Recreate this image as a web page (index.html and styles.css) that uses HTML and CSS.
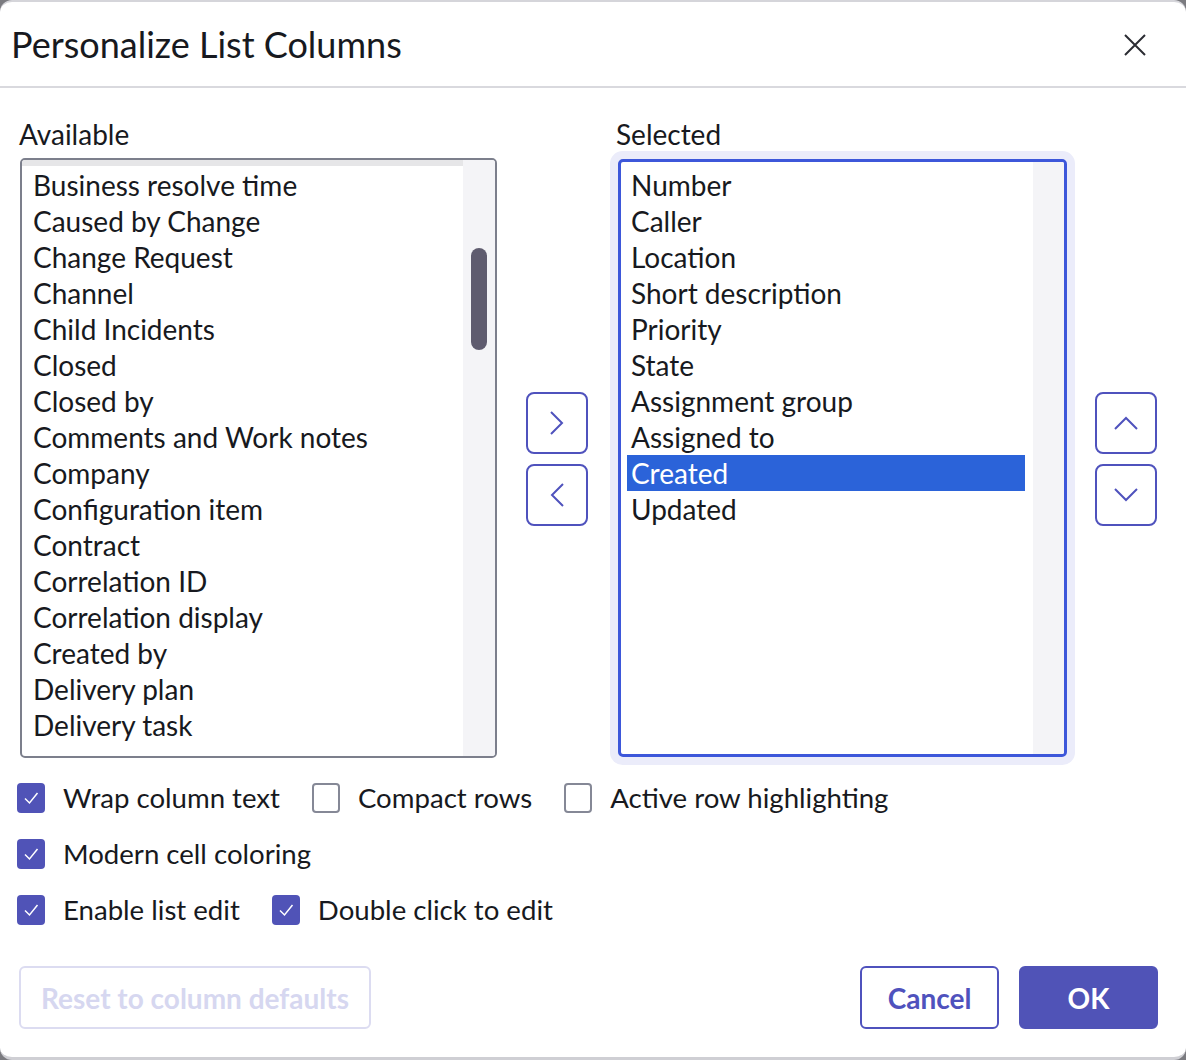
FILE: index.html
```html
<!DOCTYPE html>
<html lang="en">
<head>
<meta charset="utf-8">
<title>Personalize List Columns</title>
<link rel="stylesheet" href="styles.css">
</head>
<body>
<div class="dialog">
  <header class="dlg-head">
    <h1 class="dlg-title">Personalize List Columns</h1>
    <button class="close" aria-label="Close">
      <svg width="22" height="22" viewBox="0 0 22 22"><path d="M1 1 L21 21 M21 1 L1 21" stroke="#2b2c33" stroke-width="2" fill="none"/></svg>
    </button>
  </header>

  <main class="dlg-body">
    <div class="picker">
      <div class="label">Available</div>
      <div></div>
      <div class="label label-sel">Selected</div>
      <div></div>

      <div class="listbox avail">
        <div class="items">
          <div class="peek"></div>
          <div class="opt">Business resolve time</div>
          <div class="opt">Caused by Change</div>
          <div class="opt">Change Request</div>
          <div class="opt">Channel</div>
          <div class="opt">Child Incidents</div>
          <div class="opt">Closed</div>
          <div class="opt">Closed by</div>
          <div class="opt">Comments and Work notes</div>
          <div class="opt">Company</div>
          <div class="opt">Configuration item</div>
          <div class="opt">Contract</div>
          <div class="opt">Correlation ID</div>
          <div class="opt">Correlation display</div>
          <div class="opt">Created by</div>
          <div class="opt">Delivery plan</div>
          <div class="opt">Delivery task</div>
        </div>
        <div class="track"><div class="thumb"></div></div>
      </div>

      <div class="movers">
        <button class="icon-btn" aria-label="Add">
          <svg width="24" height="28" viewBox="0 0 24 28"><polyline points="6,3 17,14 6,25" fill="none" stroke="#4f52bd" stroke-width="2"/></svg>
        </button>
        <button class="icon-btn" aria-label="Remove">
          <svg width="24" height="28" viewBox="0 0 24 28"><polyline points="18,3 7,14 18,25" fill="none" stroke="#4f52bd" stroke-width="2"/></svg>
        </button>
      </div>

      <div class="listbox sel">
        <div class="items">
          <div class="opt">Number</div>
          <div class="opt">Caller</div>
          <div class="opt">Location</div>
          <div class="opt">Short description</div>
          <div class="opt">Priority</div>
          <div class="opt">State</div>
          <div class="opt">Assignment group</div>
          <div class="opt">Assigned to</div>
          <div class="opt is-selected">Created</div>
          <div class="opt">Updated</div>
        </div>
        <div class="track"></div>
      </div>

      <div class="movers">
        <button class="icon-btn" aria-label="Move up">
          <svg width="28" height="24" viewBox="0 0 28 24"><polyline points="3,18 14,7 25,18" fill="none" stroke="#4f52bd" stroke-width="2"/></svg>
        </button>
        <button class="icon-btn" aria-label="Move down">
          <svg width="28" height="24" viewBox="0 0 28 24"><polyline points="3,6 14,17 25,6" fill="none" stroke="#4f52bd" stroke-width="2"/></svg>
        </button>
      </div>
    </div>

    <div class="options">
      <div class="opt-row">
        <label class="check"><span class="box on"><svg width="28" height="30" viewBox="0 0 28 30"><polyline points="8,15.5 12.5,20 20.5,10" fill="none" stroke="#fff" stroke-width="1.5"/></svg></span>Wrap column text</label>
        <label class="check"><span class="box"></span>Compact rows</label>
        <label class="check"><span class="box"></span>Active row highlighting</label>
      </div>
      <div class="opt-row">
        <label class="check"><span class="box on"><svg width="28" height="30" viewBox="0 0 28 30"><polyline points="8,15.5 12.5,20 20.5,10" fill="none" stroke="#fff" stroke-width="1.5"/></svg></span>Modern cell coloring</label>
      </div>
      <div class="opt-row">
        <label class="check"><span class="box on"><svg width="28" height="30" viewBox="0 0 28 30"><polyline points="8,15.5 12.5,20 20.5,10" fill="none" stroke="#fff" stroke-width="1.5"/></svg></span>Enable list edit</label>
        <label class="check"><span class="box on"><svg width="28" height="30" viewBox="0 0 28 30"><polyline points="8,15.5 12.5,20 20.5,10" fill="none" stroke="#fff" stroke-width="1.5"/></svg></span>Double click to edit</label>
      </div>
    </div>
  </main>

  <footer class="dlg-foot">
    <button class="btn btn-reset" disabled>Reset to column defaults</button>
    <div class="foot-right">
      <button class="btn btn-secondary">Cancel</button>
      <button class="btn btn-primary">OK</button>
    </div>
  </footer>
</div>
</body>
</html>
```

FILE: styles.css
```css
* { box-sizing: border-box; }

html, body {
  margin: 0;
  padding: 0;
  background: #7b7b80;
}

body {
  font-family: Lato, "Open Sans", sans-serif;
  color: #171920;
}

.dialog {
  width: 1186px;
  height: 1060px;
  background: #fff;
  border-top: 2px solid #d5d5da;
  border-bottom: 3px solid #cfcfd4;
  border-radius: 12px;
  display: flex;
  flex-direction: column;
  overflow: hidden;
}

.dlg-head {
  height: 86px;
  border-bottom: 2px solid #d9d9de;
  display: flex;
  align-items: center;
  justify-content: space-between;
  padding: 0 40px 0 11px;
  flex: none;
}

.dlg-title {
  margin: 0;
  font-size: 36px;
  font-weight: 400;
  line-height: 44px;
}

.close {
  border: 0;
  background: none;
  padding: 0;
  width: 22px;
  height: 22px;
  display: flex;
  margin-top: 2px;
}

.dlg-body {
  padding: 28px 28px 0 20px;
}

.picker {
  display: grid;
  grid-template-columns: 477px 62px 449px 62px;
  column-gap: 29px;
  grid-template-rows: 36px auto;
  row-gap: 6px;
}
.picker > .listbox.sel { margin-left: 1px; }

.label {
  font-size: 28px;
  line-height: 36px;
  margin-left: -1px;
}

.listbox {
  position: relative;
  display: flex;
  background: #fff;
  overflow: hidden;
}

.listbox .items {
  flex: 1;
  font-size: 28px;
  line-height: 36px;
}

.avail {
  height: 600px;
  border: 2px solid #7c7f8c;
  border-radius: 5px;
}
.avail .peek {
  height: 6px;
  background: #e6e6e8;
  margin-bottom: 1px;
}
.avail .opt { padding-left: 11px; }

.track {
  width: 32px;
  background: #f4f4f7;
  flex: none;
  position: relative;
}

.thumb {
  position: absolute;
  left: 8px;
  top: 88px;
  width: 16px;
  height: 102px;
  border-radius: 8px;
  background: #5f5c6f;
}

.sel {
  height: 598px;
  margin-top: 1px;
  border: 3px solid #3d57da;
  border-radius: 5px;
  box-shadow: 0 0 0 8px #ebecfa;
  width: 449px;
}
.sel .items { padding: 5px 8px 0 6px; }
.sel .opt { padding-left: 4px; }
.sel .track { width: 31px; }

.opt { white-space: nowrap; height: 36px; }
.opt.is-selected {
  background: #2b63d9;
  color: #fff;
}

.movers {
  align-self: center;
  display: flex;
  flex-direction: column;
  gap: 10px;
  margin-top: 1px;
}

.icon-btn {
  width: 62px;
  height: 62px;
  border: 2px solid #4f52bd;
  border-radius: 8px;
  background: #fff;
  display: flex;
  align-items: center;
  justify-content: center;
  padding: 0;
}

.options {
  margin-top: 22px;
  display: flex;
  flex-direction: column;
  gap: 20px;
  margin-left: -3px;
}

.opt-row {
  display: flex;
  gap: 32px;
  height: 36px;
  align-items: center;
}

.check {
  display: flex;
  align-items: center;
  gap: 18px;
  font-size: 27.6px;
  line-height: 36px;
  white-space: nowrap;
}

.box {
  width: 28px;
  height: 30px;
  border-radius: 4px;
  border: 2px solid #858896;
  background: #fff;
  flex: none;
  display: block;
}
.box.on {
  background: #5053b7;
  border: 0;
}
.box svg { display: block; }

.dlg-foot {
  margin-top: auto;
  padding: 0 28px 28px 19px;
  display: flex;
  justify-content: space-between;
  align-items: center;
}

.foot-right {
  display: flex;
  gap: 20px;
}

.btn {
  font-family: Lato, "Open Sans", sans-serif;
  font-size: 28px;
  font-weight: 700;
  height: 63px;
  border-radius: 6px;
  padding: 0;
}

.btn-reset {
  width: 352px;
  background: #fff;
  border: 2px solid #dcdcf1;
  color: #d6d7f0;
}

.btn-secondary {
  width: 139px;
  background: #fff;
  border: 2px solid #4f52bd;
  color: #4f52bd;
}

.btn-primary {
  width: 139px;
  background: #5053b7;
  border: 2px solid #5053b7;
  color: #fff;
}
```
